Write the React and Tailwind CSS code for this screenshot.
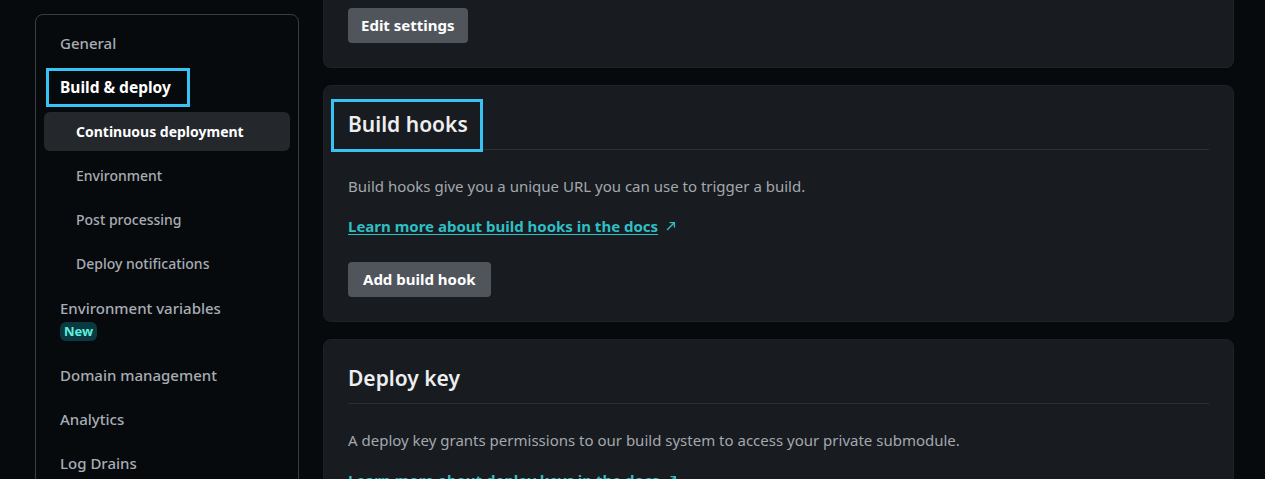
import { Fragment } from 'react';

const font = { fontFamily: '"Noto Sans", "Open Sans", sans-serif' };

const subItems = ['Continuous deployment', 'Environment', 'Post processing', 'Deploy notifications'];
const lowerItems = ['Domain management', 'Analytics', 'Log Drains'];

function ExternalArrow() {
  return (
    <svg width="12" height="12" viewBox="0 0 12 12" fill="none" className="ml-[7px] inline-block text-[#2fbfc3]">
      <path d="M2.5 9.5L9 3" stroke="currentColor" strokeWidth="1.4" strokeLinecap="round" />
      <path d="M5 2.6h4.4V7" stroke="currentColor" strokeWidth="1.4" strokeLinecap="round" strokeLinejoin="round" />
    </svg>
  );
}

function Sidebar() {
  return (
    <nav className="mt-[14px] w-[264px] shrink-0 self-start rounded-lg border border-[#3a3d43] px-2 pb-2 pt-[9px]">
      <ul className="flex flex-col gap-[5px]">
        <li className="flex h-[39px] items-center">
          <span className="pl-4 text-[15px] font-medium text-[#a8adb4]">General</span>
        </li>
        <li className="flex h-[39px] items-center">
          <span className="ml-[2px] flex h-[39px] items-center border-[3px] border-[#38c3f5] pl-[11px] pr-[16px] text-[15.5px] font-bold text-white">
            Build &amp; deploy
          </span>
        </li>
        {subItems.map((item, i) => (
          <li
            key={item}
            className={`flex h-[39px] items-center rounded-md pl-8 text-[14px] ${
              i === 0 ? 'bg-[#24272c] font-bold text-white' : 'font-medium text-[#a8adb4]'
            }`}
          >
            {item}
          </li>
        ))}
        <li className="flex flex-col items-start pb-[10px] pl-4 pt-[10px]">
          <span className="text-[15px] font-medium leading-5 text-[#a8adb4]">Environment variables</span>
          <span className="mt-1 rounded-md bg-[#0c3841] px-[4px] text-[13px] font-bold leading-[19px] text-[#5cf0dc]">
            New
          </span>
        </li>
        {lowerItems.map((item) => (
          <li key={item} className="flex h-[39px] items-center pl-4 text-[15px] font-medium text-[#a8adb4]">
            {item}
          </li>
        ))}
      </ul>
    </nav>
  );
}

function Button({ children, tight }) {
  return (
    <button
      className={`h-[35px] rounded bg-[#50555c] text-[15px] font-bold text-white ${tight ? 'px-[13px]' : 'px-[15px]'}`}
    >
      {children}
    </button>
  );
}

function Card({ title, outlined, desc, link, button }) {
  return (
    <section className="rounded-lg border border-[#1e2227] bg-[#181b1f] px-6 pb-6 pt-6">
      <h2 className="border-b border-[#2c3035] pb-[11px] text-[21px] font-semibold leading-7 text-[#eceef0]">
        {outlined ? (
          <span className="relative inline-block">
            {title}
            <span className="pointer-events-none absolute -bottom-[14px] -left-[17px] -right-[15px] -top-[11px] border-[3px] border-[#38c3f5]" />
          </span>
        ) : (
          title
        )}
      </h2>
      <p className="mt-[26px] text-[15px] leading-5 text-[#a3a8af]">{desc}</p>
      <p className="mt-5 flex items-center text-[15px] leading-5">
        <a href="#" className="font-bold text-[#2fbfc3] underline underline-offset-2">
          {link}
        </a>
        <ExternalArrow />
      </p>
      {button && (
        <div className="mt-[26px]">
          <Button>{button}</Button>
        </div>
      )}
    </section>
  );
}

export default function App() {
  return (
    <div className="h-[479px] overflow-hidden bg-[#070a0d]" style={font}>
      <div className="flex gap-[24px] pl-[35px] pr-[31px]">
        <Sidebar />
        <main className="flex min-w-0 flex-1 flex-col gap-[17px]">
          <section className="rounded-b-lg border border-t-0 border-[#1e2227] bg-[#181b1f] px-6 pb-6 pt-2">
            <Button tight>Edit settings</Button>
          </section>
          <Card
            title="Build hooks"
            outlined
            desc="Build hooks give you a unique URL you can use to trigger a build."
            link="Learn more about build hooks in the docs"
            button="Add build hook"
          />
          <Card
            title="Deploy key"
            desc="A deploy key grants permissions to our build system to access your private submodule."
            link="Learn more about deploy keys in the docs"
          />
        </main>
      </div>
    </div>
  );
}
